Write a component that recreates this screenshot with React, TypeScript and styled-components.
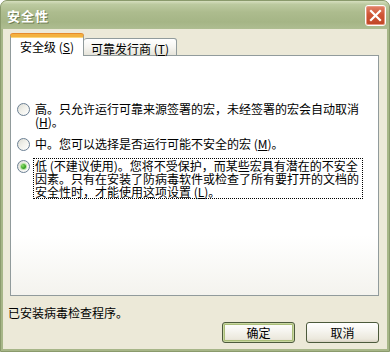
import React from "react";
import styled, { createGlobalStyle } from "styled-components";

const GlobalStyle = createGlobalStyle`
  html, body {
    margin: 0;
    padding: 0;
    background: #ffffff;
  }
  body {
    font-family: "Noto Sans CJK SC", "Liberation Sans", sans-serif;
    font-size: 12px;
    color: #000;
  }
`;

type Level = {
  id: string;
  text: string;
  mnemonic: string;
  checked?: boolean;
  focused?: boolean;
};

const levels: Level[] = [
  {
    id: "high",
    text: "高。只允许运行可靠来源签署的宏，未经签署的宏会自动取消",
    mnemonic: "H",
  },
  {
    id: "mid",
    text: "中。您可以选择是否运行可能不安全的宏",
    mnemonic: "M",
  },
  {
    id: "low",
    text: "低 (不建议使用)。您将不受保护，而某些宏具有潜在的不安全因素。只有在安装了防病毒软件或检查了所有要打开的文档的安全性时，才能使用这项设置",
    mnemonic: "L",
    checked: true,
    focused: true,
  },
];

export default function App() {
  return (
    <>
      <GlobalStyle />
      <Window>
        <TitleBar>
          <h1>安全性</h1>
          <CloseButton aria-label="关闭">
            <svg width="13" height="13" viewBox="0 0 13 13">
              <path
                d="M2 2 L11 11 M11 2 L2 11"
                stroke="#fff"
                strokeWidth="2.2"
                strokeLinecap="square"
              />
            </svg>
          </CloseButton>
        </TitleBar>

        <Body>
          <TabControl>
            <TabStrip>
              <Tab $active>
                安全级 (<u>S</u>)
              </Tab>
              <Tab>
                可靠发行商 (<u>T</u>)
              </Tab>
            </TabStrip>

            <Panel>
              <OptionList>
                {levels.map((level) => (
                  <Option key={level.id}>
                    <Radio $checked={!!level.checked} />
                    <OptionLabel $focused={!!level.focused}>
                      {level.text} (<u>{level.mnemonic}</u>)。
                    </OptionLabel>
                  </Option>
                ))}
              </OptionList>
            </Panel>
          </TabControl>

          <Status>已安装病毒检查程序。</Status>

          <ButtonRow>
            <Button $default>确定</Button>
            <Button>取消</Button>
          </ButtonRow>
        </Body>
      </Window>
    </>
  );
}

const Window = styled.div`
  width: 390px;
  height: 352px;
  box-sizing: border-box;
  display: flex;
  flex-direction: column;
  background: #a7b688;
  border: 1px solid #8a9a6c;
  border-radius: 7px 7px 0 0;
  overflow: hidden;
`;

const TitleBar = styled.div`
  height: 28px;
  flex-shrink: 0;
  display: flex;
  align-items: center;
  justify-content: space-between;
  padding: 0 3px 0 6px;
  background: linear-gradient(
    to bottom,
    #d6dfbf 0%,
    #bccaa0 12%,
    #adbc8e 40%,
    #a5b586 75%,
    #aebd91 100%
  );

  h1 {
    margin: 0;
    font-family: "Noto Sans CJK SC", sans-serif;
    font-size: 13px;
    font-weight: bold;
    color: #ffffff;
    text-shadow: 1px 1px 0 #6f7d52;
    letter-spacing: 1px;
  }
`;

const CloseButton = styled.button`
  width: 21px;
  height: 21px;
  padding: 0;
  display: flex;
  align-items: center;
  justify-content: center;
  border: 1px solid #ffffff;
  border-radius: 3px;
  background: linear-gradient(to bottom, #e2836a 0%, #cf5636 45%, #c04625 100%);
  box-shadow: inset 0 0 0 1px #e99a84;
`;

const Body = styled.div`
  flex: 1;
  display: flex;
  flex-direction: column;
  margin: 0 2px 2px 2px;
  padding: 5px 8px 6px 5px;
  background: #ece9d8;
`;

const TabControl = styled.div`
  margin-left: 2px;
  display: flex;
  flex-direction: column;
`;

const TabStrip = styled.div`
  display: flex;
  align-items: flex-end;
  height: 22px;
  margin-bottom: -1px;
  position: relative;
  z-index: 1;
`;

const Tab = styled.div<{ $active?: boolean }>`
  box-sizing: border-box;
  height: ${({ $active }) => ($active ? "22px" : "18px")};
  padding: ${({ $active }) => ($active ? "3px 9px 0" : "3px 7px 0")};
  line-height: 13px;
  white-space: nowrap;
  border: 1px solid #919b9c;
  border-bottom: ${({ $active }) => ($active ? "none" : "1px solid #919b9c")};
  border-top: ${({ $active }) =>
    $active ? "3px solid #f3b13f" : "1px solid #919b9c"};
  border-left: ${({ $active }) => ($active ? "1px solid #919b9c" : "none")};
  border-radius: 3px 3px 0 0;
  background: ${({ $active }) =>
    $active
      ? "#ffffff"
      : "linear-gradient(to bottom, #ffffff 0%, #f6f5f1 50%, #e6e4da 100%)"};
  box-shadow: ${({ $active }) =>
    $active ? "inset 0 1px 0 #fcd77c, 0 -1px 0 #e68b2c" : "none"};

  u {
    text-decoration: underline;
  }
`;

const Panel = styled.div`
  box-sizing: border-box;
  height: 241px;
  border: 1px solid #919b9c;
  background: linear-gradient(to bottom, #ffffff 0%, #ffffff 75%, #f4f3ee 100%);
  padding: 45px 0 0 6px;
`;

const OptionList = styled.div`
  display: flex;
  flex-direction: column;
  gap: 7px;
`;

const Option = styled.div`
  display: flex;
  align-items: flex-start;
  gap: 3px;
`;

const Radio = styled.span<{ $checked: boolean }>`
  flex-shrink: 0;
  box-sizing: border-box;
  width: 13px;
  height: 13px;
  margin-top: 2px;
  border: 1px solid #6b7f93;
  border-radius: 50%;
  background: linear-gradient(135deg, #dcdcd4 0%, #f0f0ea 45%, #ffffff 100%);
  display: flex;
  align-items: center;
  justify-content: center;

  &::after {
    content: "";
    display: ${({ $checked }) => ($checked ? "block" : "none")};
    width: 5px;
    height: 5px;
    border-radius: 50%;
    background: radial-gradient(circle at 35% 35%, #8fdc6c 0%, #3aa624 55%, #218a18 100%);
    box-shadow: 0 0 0 1px #b6e6a2;
  }
`;

const OptionLabel = styled.div<{ $focused: boolean }>`
  width: 326px;
  padding: 0 1px;
  line-height: 13px;
  border: 1px dotted ${({ $focused }) => ($focused ? "#000000" : "transparent")};

  u {
    text-decoration: underline;
  }
`;

const Status = styled.div`
  margin-top: 10px;
  line-height: 13px;
`;

const ButtonRow = styled.div`
  margin-top: 3px;
  display: flex;
  justify-content: flex-end;
  gap: 11px;
`;

const Button = styled.button<{ $default?: boolean }>`
  width: 73px;
  height: 21px;
  padding: 0;
  font-family: "Noto Sans CJK SC", sans-serif;
  font-size: 12px;
  line-height: 13px;
  color: #000;
  border: 1px solid #4c5a3c;
  border-radius: 3px;
  background: linear-gradient(
    to bottom,
    #ffffff 0%,
    #f6f5f0 40%,
    #ebe8dc 85%,
    #d8d2c2 100%
  );
  box-shadow: ${({ $default }) =>
    $default ? "inset 0 0 0 1px #c9d7a1, inset 0 0 0 2px #a9bd78" : "none"};
`;
